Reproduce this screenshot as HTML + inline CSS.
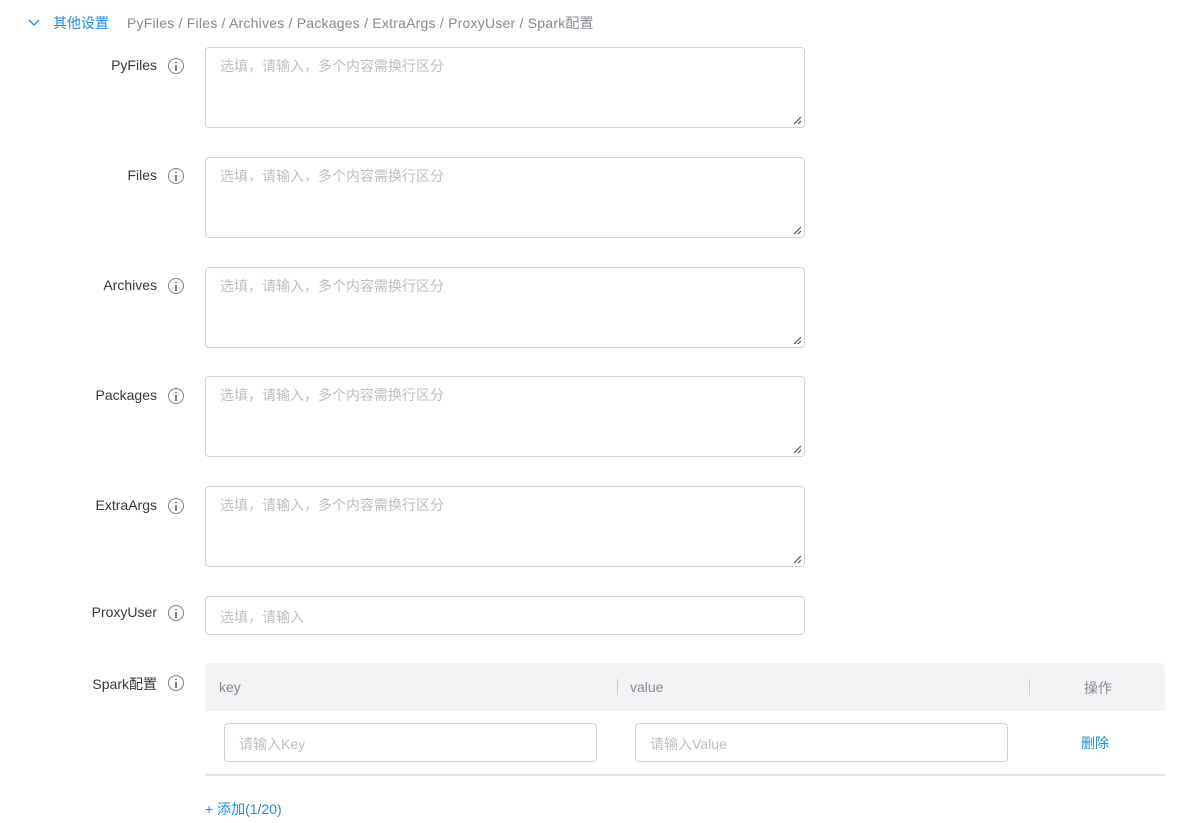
<!DOCTYPE html>
<html><head><meta charset="utf-8"><style>
*{box-sizing:border-box;margin:0;padding:0}
body{width:1180px;height:823px;background:#fff;font-family:"Liberation Sans","Noto Sans CJK SC",sans-serif;font-size:14px;color:#1f2329;position:relative;overflow:hidden}
.a{position:absolute}
.lbl{position:absolute;right:1023px;color:#333840;white-space:nowrap}
.ic{position:absolute;left:168px;width:16px;height:16px;border:1.2px solid #7b8089;border-radius:50%}
.ic:before{content:"";position:absolute;left:6px;top:2.5px;width:1.6px;height:1.6px;background:#7b8089}
.ic:after{content:"";position:absolute;left:6px;top:5.5px;width:1.6px;height:6px;background:#7b8089}
.ta{position:absolute;left:205px;width:600px;height:81px;border:1px solid #d0d3d6;border-radius:4px}
.ta span,.in span{position:absolute;left:14px;color:#bbbfc4}
.ta span{top:8px}
.ta svg{position:absolute;right:2px;bottom:2px}
.in{position:absolute;border:1px solid #d0d3d6;border-radius:4px;height:39px}
.in span{top:10px}
</style></head><body>
<svg class="a" style="left:28px;top:17px" width="12" height="10" viewBox="0 0 12 10"><path d="M1 3l5 5 5-5" stroke="#1890e6" stroke-width="1.4" fill="none"/></svg>
<div class="a" style="left:53px;top:13px;color:#1890e6">其他设置</div>
<div class="a" style="left:127px;top:13px;color:#858a93;letter-spacing:0.22px">PyFiles / Files / Archives / Packages / ExtraArgs / ProxyUser / Spark配置</div>

<div class="lbl" style="top:57px">PyFiles</div><div class="ic" style="top:58px"></div>
<div class="ta" style="top:47px"><span>选填，请输入，多个内容需换行区分</span><svg width="10" height="10"><path d="M2 9L9 2M6 9L9 6" stroke="#555" stroke-width="1.2"/></svg></div>
<div class="lbl" style="top:167px">Files</div><div class="ic" style="top:168px"></div>
<div class="ta" style="top:157px"><span>选填，请输入，多个内容需换行区分</span><svg width="10" height="10"><path d="M2 9L9 2M6 9L9 6" stroke="#555" stroke-width="1.2"/></svg></div>
<div class="lbl" style="top:277px">Archives</div><div class="ic" style="top:278px"></div>
<div class="ta" style="top:267px"><span>选填，请输入，多个内容需换行区分</span><svg width="10" height="10"><path d="M2 9L9 2M6 9L9 6" stroke="#555" stroke-width="1.2"/></svg></div>
<div class="lbl" style="top:387px">Packages</div><div class="ic" style="top:388px"></div>
<div class="ta" style="top:376px"><span>选填，请输入，多个内容需换行区分</span><svg width="10" height="10"><path d="M2 9L9 2M6 9L9 6" stroke="#555" stroke-width="1.2"/></svg></div>
<div class="lbl" style="top:497px">ExtraArgs</div><div class="ic" style="top:498px"></div>
<div class="ta" style="top:486px"><span>选填，请输入，多个内容需换行区分</span><svg width="10" height="10"><path d="M2 9L9 2M6 9L9 6" stroke="#555" stroke-width="1.2"/></svg></div>
<div class="lbl" style="top:604px">ProxyUser</div><div class="ic" style="top:605px"></div>
<div class="in" style="left:205px;top:596px;width:600px"><span>选填，请输入</span></div>
<div class="lbl" style="top:674px">Spark配置</div><div class="ic" style="top:675px"></div>

<div class="a" style="left:205px;top:663px;width:960px;height:48px;background:#f2f3f5;border-radius:4px 4px 0 0"></div>
<div class="a" style="left:219px;top:679px;color:#858a93">key</div>
<div class="a" style="left:617px;top:679px;width:1px;height:16px;background:#c9cdd2"></div>
<div class="a" style="left:630px;top:679px;color:#858a93">value</div>
<div class="a" style="left:1029px;top:679px;width:1px;height:16px;background:#c9cdd2"></div>
<div class="a" style="left:1084px;top:678px;color:#858a93">操作</div>
<div class="in" style="left:224px;top:723px;width:373px"><span>请输入Key</span></div>
<div class="in" style="left:635px;top:723px;width:373px"><span>请输入Value</span></div>
<div class="a" style="left:1081px;top:733px;color:#1890e6">删除</div>
<div class="a" style="left:205px;top:774px;width:960px;height:2px;background:#e1e4e8"></div>
<div class="a" style="left:205px;top:799px;color:#1890e6">+ 添加(1/20)</div>
</body></html>
